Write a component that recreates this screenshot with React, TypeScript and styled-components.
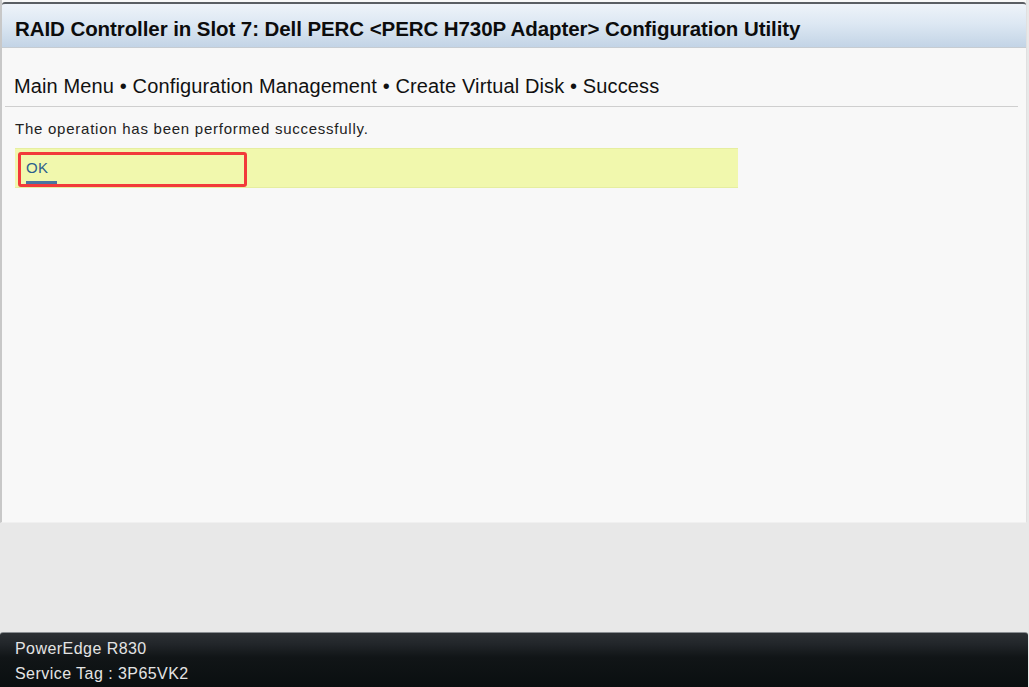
import React from "react";
import styled, { createGlobalStyle } from "styled-components";

const Global = createGlobalStyle`
  html, body { margin: 0; padding: 0; background: #e8e8e8; }
  body { font-family: "Liberation Sans", Arial, sans-serif; }
`;

const Screen = styled.div`
  width: 1029px;
  height: 687px;
  display: flex;
  flex-direction: column;
  background: #e8e8e8;
  overflow: hidden;
`;

const Panel = styled.div`
  height: 523px;
  margin-right: 2px;
  display: flex;
  flex-direction: column;
  background: #f8f8f8;
  border-left: 2px solid #c8c8c8;
  border-right: 1px solid #e0e0e0;
  border-bottom: 1px solid #f0f0f0;
  box-sizing: border-box;
`;

const TitleBar = styled.div`
  margin-top: 2px;
  height: 46px;
  box-sizing: border-box;
  display: flex;
  align-items: center;
  padding: 7px 0 0 13px;
  border-top: 2px solid #5a5e63;
  border-bottom: 1px solid #c6ccd2;
  border-radius: 3px 3px 0 0;
  background: linear-gradient(#eef3f9 0%, #dde8f3 45%, #c3d4e6 100%);
  font-weight: bold;
  font-size: 20.5px;
  color: #0c0c0c;
  letter-spacing: -0.08px;
`;

const Breadcrumb = styled.div`
  margin: 0 8px 0 3px;
  padding: 27px 0 8px 9px;
  border-bottom: 1px solid #cfcfcf;
  font-size: 20px;
  color: #111;
  letter-spacing: 0.13px;
`;

const Message = styled.div`
  padding: 13px 0 0 13px;
  font-size: 15px;
  color: #222;
  letter-spacing: 0.75px;
`;

const ActionRow = styled.div`
  margin: 11px 0 0 13px;
  width: 723px;
  height: 40px;
  box-sizing: border-box;
  background: #f1f8ad;
  border-top: 1px solid #e6eea0;
  border-bottom: 1px solid #e6eea0;
  display: flex;
  align-items: center;
  padding: 2px 0 0 3px;
`;

const Focus = styled.div`
  position: relative;
  width: 229px;
  height: 35px;
  box-sizing: border-box;
  border: 3px solid #f23a3a;
  border-radius: 3px;
  padding: 4px 0 0 5px;
`;

const OkLink = styled.span`
  font-size: 15px;
  color: #2d5f8c;
  letter-spacing: 0.3px;
`;

const Underline = styled.span`
  position: absolute;
  left: 5px;
  top: 26px;
  width: 31px;
  height: 3px;
  background: #4a74a0;
`;

const Spacer = styled.div`
  flex: 1;
`;

const Footer = styled.div`
  height: 55px;
  margin-right: 1px;
  box-sizing: border-box;
  border-radius: 3px 3px 0 0;
  border-top: 1px solid #8a8e92;
  background: linear-gradient(#2c3034 0%, #22262a 20%, #111517 45%, #0a0f10 100%);
  padding: 7px 0 0 15px;
  display: flex;
  flex-direction: column;
  gap: 7px;
  color: #e4e4e4;
  font-size: 16px;
  letter-spacing: 0.45px;
`;

export default function App() {
  return (
    <Screen>
      <Global />
      <Panel>
        <TitleBar>RAID Controller in Slot 7: Dell PERC &lt;PERC H730P Adapter&gt; Configuration Utility</TitleBar>
        <Breadcrumb>Main Menu • Configuration Management • Create Virtual Disk • Success</Breadcrumb>
        <Message>The operation has been performed successfully.</Message>
        <ActionRow>
          <Focus>
            <OkLink>OK</OkLink>
            <Underline />
          </Focus>
        </ActionRow>
      </Panel>
      <Spacer />
      <Footer>
        <div>PowerEdge R830</div>
        <div>Service Tag : 3P65VK2</div>
      </Footer>
    </Screen>
  );
}
